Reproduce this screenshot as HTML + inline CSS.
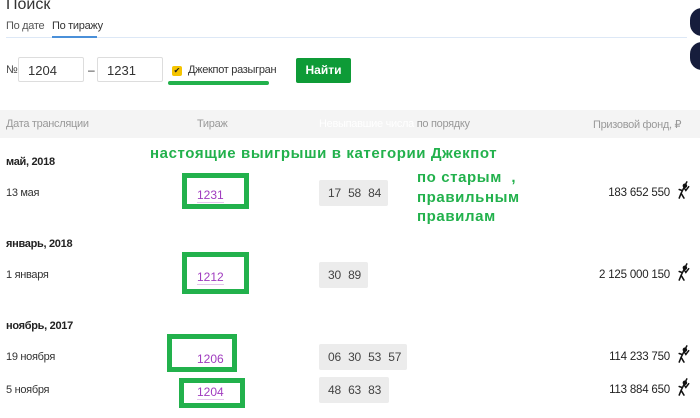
<!DOCTYPE html>
<html><head><meta charset="utf-8"><style>
body{margin:0;width:700px;height:418px;overflow:hidden;background:#fff;font-family:"Liberation Sans",sans-serif;color:#333;position:relative}
.a{position:absolute;white-space:nowrap}
.s{font-size:11px;letter-spacing:-0.3px}
.in{position:absolute;border:1px solid #ddd;border-radius:2px;height:25px;font-size:13px;line-height:25px;padding-left:9px;box-sizing:border-box;color:#333}
.gb{position:absolute;border:5px solid #22b14c;box-sizing:border-box}
.nb{position:absolute;background:#ececec;border-radius:2px;height:26px;font-size:12px;line-height:26px;color:#444;padding-left:9px;box-sizing:border-box;word-spacing:4px;white-space:nowrap;letter-spacing:-0.2px}
.g{color:#22b14c;font-weight:bold;font-size:15px;letter-spacing:0.6px;position:absolute;white-space:nowrap}
.lk{color:#a03cbf;font-size:12px;border-bottom:1px solid #e3c6ec;line-height:13px}
.h{font-weight:bold;font-size:11px;color:#222;letter-spacing:-0.3px}
.amt{position:absolute;right:30px;font-size:11.5px;color:#222;letter-spacing:-0.2px}
.ic{position:absolute;left:676px;width:14px;height:18px}
</style></head><body>
<div class="a" style="left:6px;top:-4px;font-size:16px;color:#333">Поиск</div>
<div class="a s" style="left:6px;top:20px;color:#555">По дате</div>
<div class="a s" style="left:52px;top:20px;color:#333">По тиражу</div>
<div class="a" style="left:6px;top:37px;width:681px;height:1px;background:#dde8f6"></div>
<div class="a" style="left:52px;top:36px;width:45px;height:2px;background:#4a90d9"></div>
<div class="a s" style="left:6px;top:64px;color:#444">№</div>
<div class="in" style="left:18px;top:57px;width:66px">1204</div>
<div class="a" style="left:88px;top:63px;font-size:12px">–</div>
<div class="in" style="left:97px;top:57px;width:66px">1231</div>
<div class="a" style="left:172px;top:66px;width:10px;height:10px;background:#f5c400;border-radius:2px;font-size:8px;line-height:10px;text-align:center;color:#222">✔</div>
<div class="a s" style="left:188px;top:64px;color:#333">Джекпот разыгран</div>
<div class="a" style="left:168px;top:81px;width:101px;height:4px;background:#22b14c;border-radius:2px"></div>
<div class="a" style="left:296px;top:58px;width:55px;height:25px;background:#0e9b37;border-radius:2px;color:#fff;font-weight:bold;font-size:12px;text-align:center;line-height:25px">Найти</div>
<div class="a" style="left:690px;top:8px;width:24px;height:28px;border-radius:14px;background:#161d3c"></div>
<div class="a" style="left:690px;top:42px;width:24px;height:28px;border-radius:14px;background:#161d3c"></div>
<div class="a" style="left:0;top:110px;width:700px;height:28px;background:#f4f4f4"></div>
<div class="a s" style="left:6px;top:118px;color:#999">Дата трансляции</div>
<div class="a s" style="left:197px;top:118px;color:#999">Тираж</div>
<div class="a s" style="left:319px;top:118px;color:#fff">Невыпавшие числа <span style="color:#999">по порядку</span></div>
<div class="a s" style="left:593px;top:118px;color:#999">Призовой фонд, ₽</div>
<div class="g" style="left:150px;top:145px">настоящие выигрыши в категории Джекпот</div>
<div class="g" style="left:417px;top:169px">по старым &nbsp;,</div>
<div class="g" style="left:417px;top:189px">правильным</div>
<div class="g" style="left:417px;top:208px">правилам</div>

<div class="a h" style="left:6px;top:156px">май, 2018</div>
<div class="a s" style="left:6px;top:187px">13 мая</div>
<div class="gb" style="left:182px;top:173px;width:67px;height:36px"></div>
<div class="a" style="left:197px;top:186px"><span class="lk">1231</span></div>
<div class="nb" style="left:319px;top:180px;width:69px">17 58 84</div>
<div class="amt" style="top:187px">183 652 550</div>

<div class="a h" style="left:6px;top:238px">январь, 2018</div>
<div class="a s" style="left:6px;top:269px">1 января</div>
<div class="gb" style="left:182px;top:252px;width:67px;height:42px"></div>
<div class="a" style="left:197px;top:268px"><span class="lk">1212</span></div>
<div class="nb" style="left:319px;top:262px;width:49px">30 89</div>
<div class="amt" style="top:269px">2 125 000 150</div>

<div class="a h" style="left:6px;top:320px">ноябрь, 2017</div>
<div class="a s" style="left:6px;top:351px">19 ноября</div>
<div class="gb" style="left:167px;top:334px;width:70px;height:38px"></div>
<div class="a" style="left:197px;top:350px"><span class="lk" style="border:0">1206</span></div>
<div class="nb" style="left:319px;top:344px;width:88px">06 30 53 57</div>
<div class="amt" style="top:351px">114 233 750</div>

<div class="a s" style="left:6px;top:384px">5 ноября</div>
<div class="gb" style="left:179px;top:378px;width:66px;height:30px"></div>
<div class="a" style="left:197px;top:383px"><span class="lk">1204</span></div>
<div class="nb" style="left:319px;top:377px;width:70px">48 63 83</div>
<div class="amt" style="top:384px">113 884 650</div>

<svg width="0" height="0" style="position:absolute"><defs><g id="p" stroke="#111" stroke-width="1.6" fill="none" stroke-linecap="round"><circle cx="9" cy="3" r="1.6" fill="#111"/><path d="M10 1 L11 -1 M8 5 L5 11 M8 5 L10 8 L13 4 M5 11 L3 16 M5 11 L8 16 M6 8 L3 7"/></g></defs></svg>
<svg class="ic" style="top:181px" viewBox="0 -2 14 19"><use href="#p"/></svg>
<svg class="ic" style="top:263px" viewBox="0 -2 14 19"><use href="#p"/></svg>
<svg class="ic" style="top:345px" viewBox="0 -2 14 19"><use href="#p"/></svg>
<svg class="ic" style="top:378px" viewBox="0 -2 14 19"><use href="#p"/></svg>
</body></html>
